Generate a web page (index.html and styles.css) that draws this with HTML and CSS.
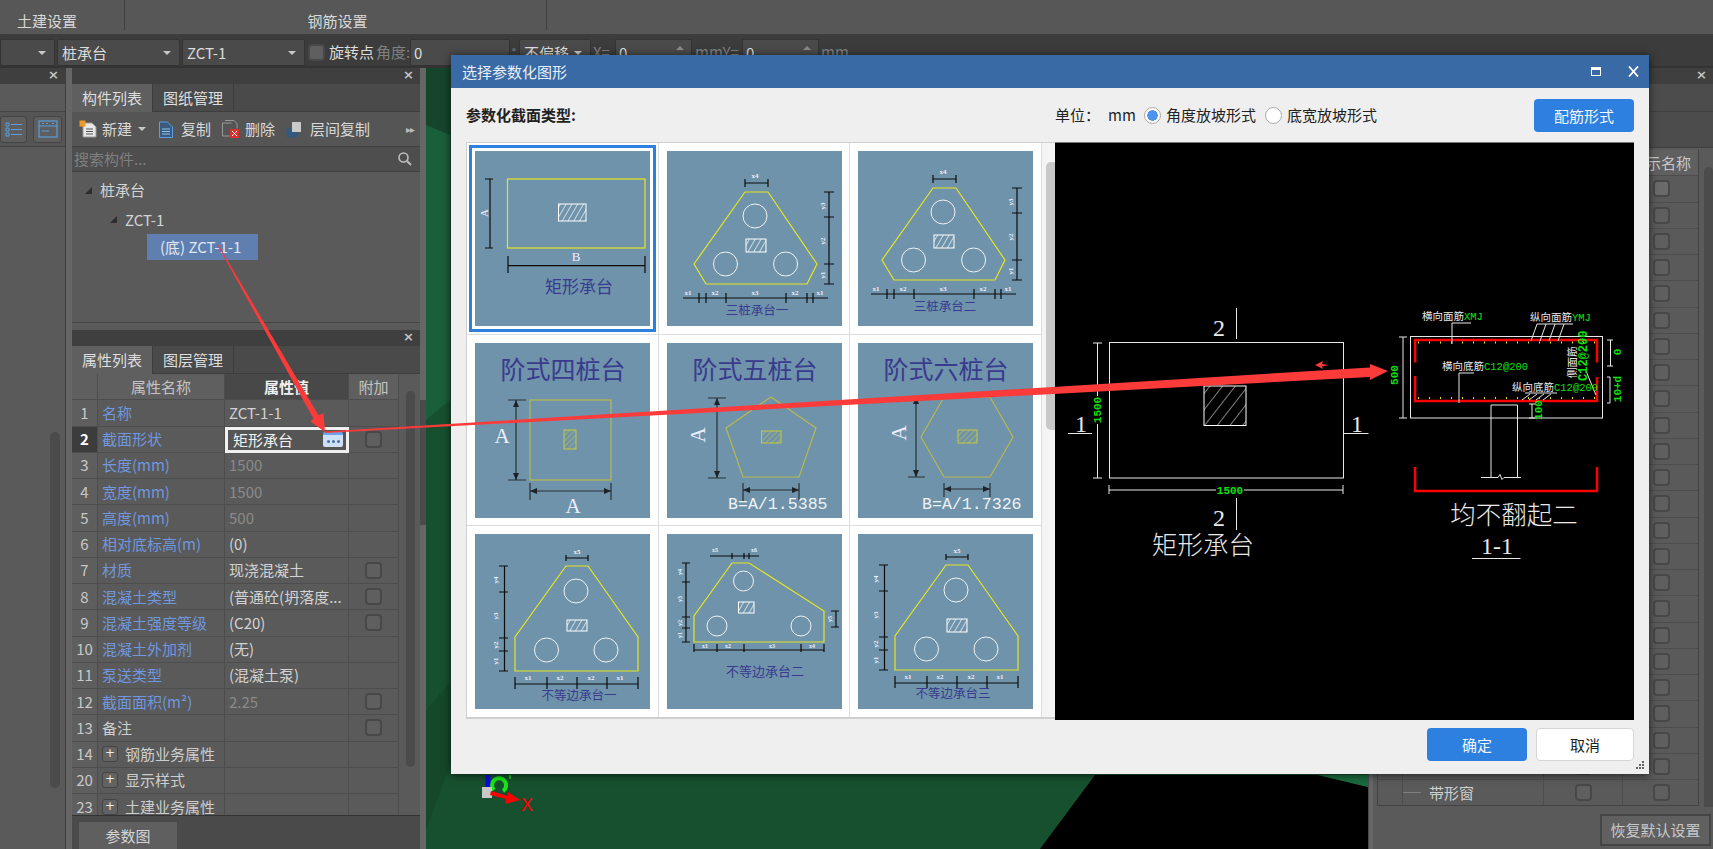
FILE: index.html
```html
<!DOCTYPE html>
<html lang="zh-CN">
<head>
<meta charset="utf-8">
<title>选择参数化图形</title>
<link rel="stylesheet" href="styles.css">
</head>
<body>
<svg class="defs" width="0" height="0" aria-hidden="true">
  <defs>
    <pattern id="hw" width="5" height="5" patternUnits="userSpaceOnUse" patternTransform="rotate(30)"><line x1="0" y1="0" x2="0" y2="5" stroke="#fff" stroke-width="1.300"/></pattern>
    <pattern id="hy" width="4" height="4" patternUnits="userSpaceOnUse" patternTransform="rotate(45)"><line x1="0" y1="0" x2="0" y2="4" stroke="#c9c93f" stroke-width="1"/></pattern>
    <pattern id="hb" width="10" height="10" patternUnits="userSpaceOnUse" patternTransform="rotate(38)"><line x1="0" y1="0" x2="0" y2="10" stroke="#fff" stroke-width="1"/></pattern>
  </defs>
</svg>
<div class="app">
  <header class="ribbon">
    <div class="rb-sec rb-first">土建设置</div>
    <div class="rb-sec rb-second">钢筋设置</div>
  </header>
  <div class="optbar">
    <div class="combo c1"><span class="caret"></span></div>
    <div class="combo c2">桩承台<span class="caret"></span></div>
    <div class="combo c2">ZCT-1<span class="caret"></span></div>
    <span class="cb cb-top"></span>
    <span class="opt-l">旋转点</span>
    <span class="opt-d o-a">角度:</span>
    <div class="field f1">0</div>
    <span class="deg">°</span>
    <div class="combo c3">不偏移<span class="caret"></span></div>
    <span class="opt-d o-x">X=</span>
    <div class="field f2">0<span class="spin"></span></div>
    <span class="opt-d o-y">mmY=</span>
    <div class="field f2">0<span class="spin"></span></div>
    <span class="opt-d">mm</span>
  </div>
  <div class="work">
    <aside class="dock-l">
      <div class="ptitle"><span class="x">×</span></div>
      <div class="dl-band"></div>
      <div class="dl-tools">
        <span class="tbtn tb-a"><svg width="18" height="16" viewBox="0 0 18 16"><path d="M1 2h3v3H1zM1 7h3v3H1zM1 12h3v3H1z" fill="none" stroke="#5b9fe0"/><path d="M6 3.500h11M6 8.500h11M6 13.500h11" stroke="#5b9fe0"/></svg></span>
        <span class="tbtn tb-b"><svg width="20" height="18" viewBox="0 0 20 18"><rect x="1" y="1" width="18" height="16" fill="none" stroke="#5b9fe0" stroke-width="1.200"/><path d="M1 6h18M4 3.500h2M8 3.500h2M14 3.500h2M4 11h7" stroke="#5b9fe0"/></svg></span>
      </div>
      <div class="dl-body"><span class="dl-thumb"></span></div>
    </aside>
    <div class="gut g7"></div>
    <div class="col-mid">
      <section class="panel p-list">
        <div class="ptitle"><span class="x">×</span></div>
        <div class="tabs"><span class="tab on">构件列表</span><span class="tab">图纸管理</span></div>
        <div class="lt-tools">
          <svg class="ic i-new" width="18" height="18" viewBox="0 0 18 18"><path d="M4 3h9l4 4v10H4z" fill="#e8e8e8" stroke="#9a9a9a"/><path d="M7 9h7M7 11.500h7M7 14h7" stroke="#555"/><rect x="0.500" y="0.500" width="6" height="6" fill="#f09a28"/></svg>
          <span class="lt">新建</span><span class="caret cr-new"></span>
          <svg class="ic i-cp" width="16" height="17" viewBox="0 0 16 17"><path d="M1.500 1h8l5 5v10.500h-13z" fill="#3a5a7e" stroke="#5b9fe0"/><path d="M4 8h8M4 10.500h8M4 13h8" stroke="#8fc3f0"/></svg>
          <span class="lt">复制</span>
          <svg class="ic i-del" width="18" height="18" viewBox="0 0 18 18"><path d="M3 .500h9l3 3v5" fill="none" stroke="#999"/><path d="M.500 3h9M.500 3v13h7" fill="none" stroke="#999"/><rect x="8" y="9" width="9" height="9" fill="#d8322f"/><path d="M10 11l5 5M15 11l-5 5" stroke="#fff"/></svg>
          <span class="lt">删除</span>
          <svg class="ic i-lay" width="16" height="17" viewBox="0 0 16 17"><path d="M1 6v10h9l3-3" fill="#33597f" stroke="#33597f"/><rect x="6" y="1" width="9" height="10" fill="#c9c9c9"/></svg>
          <span class="lt">层间复制</span>
          <span class="more">▸▸</span>
        </div>
        <div class="search"><span>搜索构件...</span><svg width="14" height="14" viewBox="0 0 14 14"><circle cx="5.500" cy="5.500" r="4.500" fill="none" stroke="#bdbdbd" stroke-width="1.600"/><path d="M9 9l4 4" stroke="#bdbdbd" stroke-width="2"/></svg></div>
        <div class="tree">
          <div class="node n0"><span class="tri"></span>桩承台</div>
          <div class="node n1"><span class="tri"></span>ZCT-1</div>
          <div class="node n2"><span class="picked">(底) ZCT-1-1</span></div>
        </div>
      </section>
      <section class="panel p-prop">
        <div class="ptitle"><span class="x">×</span></div>
        <div class="tabs"><span class="tab on">属性列表</span><span class="tab">图层管理</span></div>
        <div class="pwrap">
          <div class="ptable">
            <div class="pc hd"></div><div class="pc hd hn">属性名称</div><div class="pc hd hv">属性值</div><div class="pc hd ha">附加</div>
            <div class="pc num">1</div><div class="pc nm">名称</div><div class="pc val">ZCT-1-1</div><div class="pc add"></div>
            <div class="pc num cur">2</div><div class="pc nm">截面形状</div><div class="pc val edit">矩形承台<span class="dots"><i></i><i></i><i></i></span></div><div class="pc add"><span class="cb"></span></div>
            <div class="pc num">3</div><div class="pc nm">长度(mm)</div><div class="pc val dim">1500</div><div class="pc add"></div>
            <div class="pc num">4</div><div class="pc nm">宽度(mm)</div><div class="pc val dim">1500</div><div class="pc add"></div>
            <div class="pc num">5</div><div class="pc nm">高度(mm)</div><div class="pc val dim">500</div><div class="pc add"></div>
            <div class="pc num">6</div><div class="pc nm">相对底标高(m)</div><div class="pc val">(0)</div><div class="pc add"></div>
            <div class="pc num">7</div><div class="pc nm">材质</div><div class="pc val">现浇混凝土</div><div class="pc add"><span class="cb"></span></div>
            <div class="pc num">8</div><div class="pc nm">混凝土类型</div><div class="pc val">(普通砼(坍落度...</div><div class="pc add"><span class="cb"></span></div>
            <div class="pc num">9</div><div class="pc nm">混凝土强度等级</div><div class="pc val">(C20)</div><div class="pc add"><span class="cb"></span></div>
            <div class="pc num">10</div><div class="pc nm">混凝土外加剂</div><div class="pc val">(无)</div><div class="pc add"></div>
            <div class="pc num">11</div><div class="pc nm">泵送类型</div><div class="pc val">(混凝土泵)</div><div class="pc add"></div>
            <div class="pc num">12</div><div class="pc nm">截面面积(m²)</div><div class="pc val dim">2.25</div><div class="pc add"><span class="cb"></span></div>
            <div class="pc num">13</div><div class="pc nm grey">备注</div><div class="pc val"></div><div class="pc add"><span class="cb"></span></div>
            <div class="pc num">14</div><div class="pc nm grey grp"><span class="plus">+</span>钢筋业务属性</div><div class="pc val"></div><div class="pc add"></div>
            <div class="pc num">20</div><div class="pc nm grey grp"><span class="plus">+</span>显示样式</div><div class="pc val"></div><div class="pc add"></div>
            <div class="pc num">23</div><div class="pc nm grey grp"><span class="plus">+</span>土建业务属性</div><div class="pc val"></div><div class="pc add"></div>
          </div>
          <div class="pscroll"><span class="pthumb"></span></div>
        </div>
        <div class="btabs"><span class="btab">参数图</span></div>
      </section>
    </div>
    <div class="gut g6"><span class="handle"></span></div>
    <main class="view">
      <svg class="scene" viewBox="426 68 942 781" width="942" height="781" aria-hidden="true">
        <rect x="426" y="68" width="942" height="781" fill="#17502f"/>
        <polygon points="426,68 1368,68 1368,100 450,135 426,125" fill="#16452c"/>
        <polygon points="426,125 450,135 450,400 426,420" fill="#1a5e3a"/>
        <polygon points="426,710 452,680 452,760 426,830" fill="#154829"/>
        <polygon points="1040,849 1095,775 1318,775 1368,787 1368,849" fill="#000"/>
        <polygon points="1318,775 1368,775 1368,787" fill="#1b6a3e"/>
        <path d="M488 775v16" stroke="#0a0ae0" stroke-width="5"/>
        <path d="M494 790a7 7 0 1 1 9 1" fill="none" stroke="#19e619" stroke-width="4"/>
        <path d="M510 775v4" stroke="#19e619" stroke-width="1.500"/>
        <rect x="482" y="787" width="10" height="11" fill="#c8c8c8"/>
        <polygon points="491,791 508,796 508,792 520,800 505,804 506,799 490,795" fill="#f00"/>
        <text class="axis" x="521" y="811">X</text>
      </svg>
    </main>
    <div class="gut g5"></div>
    <aside class="dock-r">
      <div class="ptitle"><span class="x">×</span></div>
      <div class="dr-band b1"></div>
      <div class="dr-band b2"></div>
      <div class="dr-main">
        <div class="rtable">
          <div class="rrow rhead"><span></span><span>构件类型</span><span>显示图元</span><span>显示名称</span></div>
          <div class="rrow"><span></span><span></span><span><b class="cb lit"></b></span><span><b class="cb lit"></b></span></div>
          <div class="rrow"><span></span><span></span><span><b class="cb"></b></span><span><b class="cb"></b></span></div>
          <div class="rrow"><span></span><span></span><span><b class="cb"></b></span><span><b class="cb"></b></span></div>
          <div class="rrow"><span></span><span></span><span><b class="cb"></b></span><span><b class="cb"></b></span></div>
          <div class="rrow"><span></span><span></span><span><b class="cb"></b></span><span><b class="cb"></b></span></div>
          <div class="rrow"><span></span><span></span><span><b class="cb"></b></span><span><b class="cb"></b></span></div>
          <div class="rrow"><span></span><span></span><span><b class="cb"></b></span><span><b class="cb"></b></span></div>
          <div class="rrow"><span></span><span></span><span><b class="cb"></b></span><span><b class="cb"></b></span></div>
          <div class="rrow"><span></span><span></span><span><b class="cb"></b></span><span><b class="cb"></b></span></div>
          <div class="rrow"><span></span><span></span><span><b class="cb"></b></span><span><b class="cb"></b></span></div>
          <div class="rrow"><span></span><span></span><span><b class="cb"></b></span><span><b class="cb"></b></span></div>
          <div class="rrow"><span></span><span></span><span><b class="cb"></b></span><span><b class="cb"></b></span></div>
          <div class="rrow"><span></span><span></span><span><b class="cb"></b></span><span><b class="cb"></b></span></div>
          <div class="rrow"><span></span><span></span><span><b class="cb"></b></span><span><b class="cb"></b></span></div>
          <div class="rrow"><span></span><span></span><span><b class="cb"></b></span><span><b class="cb"></b></span></div>
          <div class="rrow"><span></span><span></span><span><b class="cb"></b></span><span><b class="cb"></b></span></div>
          <div class="rrow"><span></span><span></span><span><b class="cb"></b></span><span><b class="cb"></b></span></div>
          <div class="rrow"><span></span><span></span><span><b class="cb"></b></span><span><b class="cb"></b></span></div>
          <div class="rrow"><span></span><span></span><span><b class="cb"></b></span><span><b class="cb"></b></span></div>
          <div class="rrow"><span></span><span></span><span><b class="cb"></b></span><span><b class="cb"></b></span></div>
          <div class="rrow"><span></span><span></span><span><b class="cb"></b></span><span><b class="cb"></b></span></div>
          <div class="rrow"><span></span><span></span><span><b class="cb"></b></span><span><b class="cb"></b></span></div>
          <div class="rrow"><span></span><span></span><span><b class="cb"></b></span><span><b class="cb"></b></span></div>
          <div class="rrow"><span></span><span class="rname"><i class="dash"></i>带形窗</span><span><b class="cb"></b></span><span><b class="cb"></b></span></div>
        </div>
        <div class="rscroll"></div>
      </div>
      <div class="dr-foot"><span class="restore">恢复默认设置</span></div>
    </aside>
  </div>

  <div class="dialog">
    <div class="dlg-title">
      <span class="dlg-name">选择参数化图形</span>
      <span class="dlg-max"></span>
      <svg class="dlg-x" width="13" height="11" viewBox="0 0 13 11"><path d="M2 .500l9 10M11 .500l-9 10" stroke="#fff" stroke-width="1.800"/></svg>
    </div>
    <div class="dlg-top">
      <b class="dlg-label">参数化截面类型:</b>
      <span class="unit">单位：</span><span class="unit-v">mm</span>
      <span class="radio on"></span><span class="r-t">角度放坡形式</span>
      <span class="radio"></span><span class="r-t">底宽放坡形式</span>
      <span class="btn pri btn-top">配筋形式</span>
    </div>
    <div class="dlg-main">
      <div class="gallery">
        <div class="cells">
          <div class="cell sel">
            <svg class="thumb" viewBox="0 0 175 175">
              <rect class="ly" x="32.500" y="28" width="137.500" height="69"/>
              <rect x="83.500" y="53" width="27.500" height="17" fill="url(#hw)" stroke="#fff"/>
              <path class="lk" d="M15 28v69M10 28h8M10 97h8M33 114.700h137M33 105v17M170 105v17"/>
              <text class="tw s11 sf" transform="rotate(-90 9 62)" x="9" y="66">A</text>
              <text class="tw s13 sf" x="101" y="110">B</text>
              <text class="tp s17" x="104" y="142">矩形承台</text>
            </svg>
          </div>
          <div class="cell">
            <svg class="thumb" viewBox="0 0 175 175"><g>
              <polygon class="ly" points="78,41 101,41 150,113 140,133 39,133 27,113"/>
              <circle class="lw" cx="88" cy="65" r="12"/><circle class="lw" cx="58.500" cy="113" r="12"/><circle class="lw" cx="118.600" cy="113" r="12"/>
              <rect x="79" y="88" width="20" height="13" fill="url(#hw)" stroke="#fff"/>
              <path class="lk" d="M78 32h23M78 28v8M101 28v8M162 41v92M157 41h10M157 66h10M157 113h10M157 133h10M16 147h145M32 142v10M39 142v10M59 142v10M119 142v10M140 142v10M146 142v10"/>
              <text class="tw s7" x="88" y="27">x4</text>
              <text class="tw s7" transform="rotate(-90 156 55)" x="156" y="57">y3</text><text class="tw s7" transform="rotate(-90 156 90)" x="156" y="92">y2</text><text class="tw s7" transform="rotate(-90 156 124)" x="156" y="126">y1</text>
              <text class="tw s7" x="21" y="144">x1</text><text class="tw s7" x="48" y="144">x2</text><text class="tw s7" x="88" y="144">x3</text><text class="tw s7" x="128" y="144">x2</text><text class="tw s7" x="153" y="144">x1</text>
              <text class="tp s12" x="90" y="164">三桩承台一</text>
            </g></svg>
          </div>
          <div class="cell">
            <svg class="thumb" viewBox="0 0 175 175"><g transform="translate(-3 -4)">
              <polygon class="ly" points="78,41 101,41 150,113 140,133 39,133 27,113"/>
              <circle class="lw" cx="88" cy="65" r="12"/><circle class="lw" cx="58.500" cy="113" r="12"/><circle class="lw" cx="118.600" cy="113" r="12"/>
              <rect x="79" y="88" width="20" height="13" fill="url(#hw)" stroke="#fff"/>
              <path class="lk" d="M78 32h23M78 28v8M101 28v8M162 41v92M157 41h10M157 66h10M157 113h10M157 133h10M16 147h145M32 142v10M39 142v10M59 142v10M119 142v10M140 142v10M146 142v10"/>
              <text class="tw s7" x="88" y="27">x4</text>
              <text class="tw s7" transform="rotate(-90 156 55)" x="156" y="57">y3</text><text class="tw s7" transform="rotate(-90 156 90)" x="156" y="92">y2</text><text class="tw s7" transform="rotate(-90 156 124)" x="156" y="126">y1</text>
              <text class="tw s7" x="21" y="144">x1</text><text class="tw s7" x="48" y="144">x2</text><text class="tw s7" x="88" y="144">x3</text><text class="tw s7" x="128" y="144">x2</text><text class="tw s7" x="153" y="144">x1</text>
              <text class="tp s12" x="90" y="164">三桩承台二</text>
            </g></svg>
          </div>
          <div class="cell">
            <svg class="thumb" viewBox="0 0 175 175">
              <text class="tp s25" x="88" y="36">阶式四桩台</text>
              <rect class="lo" x="55" y="57" width="81" height="80"/>
              <rect x="89" y="87" width="12" height="19" fill="url(#hy)" stroke="#c9c93f"/>
              <path class="ld" d="M41 57v80M33 57h18M33 137h18M55 148h81M55 140v17M136 140v17"/>
              <path class="af" d="M41 57l-3 7h6zM41 137l-3-7h6zM55 148l7-3v6zM136 148l-7-3v6z"/>
              <text class="tw s20 sf" x="27" y="100">A</text>
              <text class="tw s20 sf" x="98" y="170">A</text>
            </svg>
          </div>
          <div class="cell">
            <svg class="thumb" viewBox="0 0 175 175">
              <text class="tp s25" x="88" y="36">阶式五桩台</text>
              <polygon class="lo" points="104,54 149,85 132,134 76,134 59,85"/>
              <rect x="94.500" y="88" width="19.500" height="12" fill="url(#hy)" stroke="#c9c93f"/>
              <path class="ld" d="M50 55v80M41 55h18M41 135h18M76 147h56M76 140v18M132 140v18"/>
              <path class="af" d="M50 55l-3 7h6zM50 135l-3-7h6zM76 147l7-3v6zM132 147l-7-3v6z"/>
              <text class="tw s20 sf" transform="rotate(-90 31 92)" x="31" y="99">A</text>
              <text class="tm" x="61" y="166">B=A/1.5385</text>
            </svg>
          </div>
          <div class="cell">
            <svg class="thumb" viewBox="0 0 175 175">
              <text class="tp s25" x="88" y="36">阶式六桩台</text>
              <polygon class="lo" points="63,94 86,54 132,54 155,94 132,134 86,134"/>
              <rect x="100" y="87" width="19" height="13" fill="url(#hy)" stroke="#c9c93f"/>
              <path class="ld" d="M58 54v80M50 54h17M50 134h17M86 146h46M86 140v14M132 140v14"/>
              <path class="af" d="M58 54l-3 7h6zM58 134l-3-7h6zM86 146l7-3v6zM132 146l-7-3v6z"/>
              <text class="tw s20 sf" transform="rotate(-90 41 90)" x="41" y="97">A</text>
              <text class="tm" x="64" y="166">B=A/1.7326</text>
            </svg>
          </div>
          <div class="cell">
            <svg class="thumb" viewBox="0 0 175 175"><g>
              <polygon class="ly" points="91,32 113,32 163,103 163,137 40,137 40,103"/>
              <circle class="lw" cx="101" cy="57" r="12"/><circle class="lw" cx="71.500" cy="116" r="12"/><circle class="lw" cx="131" cy="116" r="12"/>
              <rect x="92" y="86" width="20" height="11" fill="url(#hw)" stroke="#fff"/>
              <path class="lk" d="M91 24h22M91 21v6M113 21v6M29.500 32v105M24 32h9M24 58h9M24 104h9M24 117h9M24 137h9M40 150h123M40 143v12M72 143v12M102 143v12M132 143v12M163 143v12"/>
              <text class="tw s7" x="102" y="20">x5</text>
              <text class="tw s7" transform="rotate(-90 21 46)" x="21" y="48">y4</text><text class="tw s7" transform="rotate(-90 21 82)" x="21" y="84">y3</text><text class="tw s7" transform="rotate(-90 21 111)" x="21" y="113">y2</text><text class="tw s7" transform="rotate(-90 21 127)" x="21" y="129">y1</text>
              <text class="tw s7" x="53" y="146">x1</text><text class="tw s7" x="85" y="146">x2</text><text class="tw s7" x="116" y="146">x2</text><text class="tw s7" x="145" y="146">x1</text>
              <text class="tp s12" x="104" y="166">不等边承台一</text>
            </g></svg>
          </div>
          <div class="cell">
            <svg class="thumb" viewBox="0 0 175 175">
              <polygon class="ly" points="65,29 82,29 157,77 157,108 27,108 27,82"/>
              <circle class="lw" cx="76.500" cy="47" r="10"/><circle class="lw" cx="50" cy="92" r="10"/><circle class="lw" cx="134" cy="92" r="10"/>
              <rect x="71.500" y="68" width="15.500" height="11" fill="url(#hw)" stroke="#fff"/>
              <path class="lk" d="M43 22h49M65 19v6M77 19v6M82 19v6M19 29v79M15 29h8M15 48h8M15 83h8M15 94h8M15 108h8M169 77v16M164 77h8M164 93h8M27 116h130M27 110v8M50 110v8M77 110v8M134 110v8M157 110v8"/>
              <text class="tw s6" x="48" y="18">x5</text><text class="tw s6" x="87" y="18">x6</text>
              <text class="tw s6" transform="rotate(-90 13 38)" x="13" y="40">y4</text><text class="tw s6" transform="rotate(-90 13 65)" x="13" y="67">y3</text><text class="tw s6" transform="rotate(-90 13 89)" x="13" y="91">y2</text><text class="tw s6" transform="rotate(-90 13 101)" x="13" y="103">y1</text><text class="tw s6" transform="rotate(-90 163 85)" x="163" y="87">y5</text>
              <text class="tw s6" x="38" y="114">x1</text><text class="tw s6" x="61" y="114">x2</text><text class="tw s6" x="105" y="114">x3</text><text class="tw s6" x="145" y="114">x4</text>
              <text class="tp s13a" x="98" y="142">不等边承台二</text>
            </svg>
          </div>
          <div class="cell">
            <svg class="thumb" viewBox="0 0 175 175"><g transform="translate(-3 -1)">
              <polygon class="ly" points="91,32 113,32 163,103 163,137 40,137 40,103"/>
              <circle class="lw" cx="101" cy="57" r="12"/><circle class="lw" cx="71.500" cy="116" r="12"/><circle class="lw" cx="131" cy="116" r="12"/>
              <rect x="92" y="86" width="20" height="13" fill="url(#hw)" stroke="#fff"/>
              <path class="lk" d="M91 24h22M91 21v6M113 21v6M29.500 32v105M24 32h9M24 58h9M24 104h9M24 117h9M24 137h9M40 150h123M40 143v12M72 143v12M102 143v12M132 143v12M163 143v12"/>
              <text class="tw s7" x="102" y="20">x5</text>
              <text class="tw s7" transform="rotate(-90 21 46)" x="21" y="48">y4</text><text class="tw s7" transform="rotate(-90 21 82)" x="21" y="84">y3</text><text class="tw s7" transform="rotate(-90 21 111)" x="21" y="113">y2</text><text class="tw s7" transform="rotate(-90 21 127)" x="21" y="129">y1</text>
              <text class="tw s7" x="53" y="146">x1</text><text class="tw s7" x="85" y="146">x2</text><text class="tw s7" x="116" y="146">x2</text><text class="tw s7" x="145" y="146">x1</text>
              <text class="tp s12" x="98" y="165">不等边承台三</text>
            </g></svg>
          </div>
          <div class="cell"></div><div class="cell"></div><div class="cell"></div>
        </div>
        <div class="gscroll"><span class="gthumb"></span></div>
      </div>
      <div class="preview">
        <svg class="cad" viewBox="1055 142 579 578" width="579" height="578">
          <rect class="cw" x="1109.500" y="341.500" width="234" height="135.500"/>
          <rect x="1204" y="385" width="42" height="39.500" fill="url(#hb)" stroke="#fff"/>
          <path class="cw" d="M1236.500 307v31M1236.500 497v32M1068 432.500h24M1343.500 432.500h25M1097.500 342v135M1093 342h9M1093 477h9M1109 489h234M1109 484v9M1343 484v9"/>
          <text class="cn s21" x="1219" y="335">2</text><text class="cn s21" x="1219" y="525">2</text>
          <text class="cn s21" x="1081" y="431">1</text><text class="cn s21" x="1357" y="431">1</text>
          <rect x="1091" y="395" width="13" height="28" fill="#000"/>
          <text class="cg s10" transform="rotate(-90 1097 409)" x="1097" y="412.500">1500</text>
          <rect x="1216" y="484" width="28" height="10" fill="#000"/>
          <text class="cg s10" x="1230" y="493">1500</text>
          <text class="cn s25n" x="1203" y="553">矩形承台</text>

          <rect class="cw" x="1410.500" y="335.500" width="192" height="81.500"/>
          <path class="cr" d="M1415 361.500V339h182v22.500M1415 375v25h182v-24"/>
          <path class="cr" d="M1415 466v24h182v-24"/>
          <path class="dotted" d="M1418 341.500h178M1418 397h178"/>
          <path class="cw" d="M1491 476.500V404h26.500v72.500M1481 476.500h17l2-3 2 5 2-2h17"/>
          <path class="cw" d="M1403 336v81M1399 336h8M1399 417h8M1452 343v-21h19M1459 402v-30h15M1537 323h36M1531 340l6-17M1540 340l6-17M1549 340l6-17M1558 340l6-17M1522 399l8-6M1529 399l8-6M1536 399l8-6M1543 399l8-6M1525 392h32"/>
          <path class="cw" d="M1610.500 339v26M1607 339h6M1607 365h6M1610 376v26M1607 376h3M1607 402h3M1532 403v14M1529 403h6M1529 417h6M1586 370l10 24"/>
          <text class="cn s10a st" x="1422" y="319">横向面筋<tspan class="g">XMJ</tspan></text>
          <text class="cn s10a st" x="1530" y="320">纵向面筋<tspan class="g">YMJ</tspan></text>
          <text class="cn s10a st" x="1442" y="369">横向底筋<tspan class="g">C12@200</tspan></text>
          <text class="cn s10a st" x="1512" y="390">纵向底筋<tspan class="g">C12@200</tspan></text>
          <text class="cn s10a st" transform="rotate(-90 1576 377)" x="1576" y="377">侧面筋</text>
          <text class="cg s11a st" transform="rotate(-90 1587 380)" x="1587" y="380">C12@200</text>
          <text class="cg s10" transform="rotate(-90 1394 374)" x="1394" y="378">500</text>
          <text class="cg s10" transform="rotate(-90 1617 351)" x="1617" y="355">0</text>
          <text class="cg s10" transform="rotate(-90 1617 388)" x="1617" y="392">10+d</text>
          <text class="cg s10" transform="rotate(-90 1538 409)" x="1538" y="413">100</text>
          <text class="cn s25n" x="1514" y="523">均不翻起二</text>
          <text class="cn s21" x="1497" y="553">1-1</text>
          <path class="cw" d="M1472 557.500h48.500"/>
        </svg>
      </div>
    </div>
    <div class="dlg-foot">
      <span class="btn pri">确定</span><span class="btn sec">取消</span>
      <svg class="grip" width="10" height="10" viewBox="0 0 10 10"><path d="M7 1h2v2H7zM4 4h2v2H4zM7 4h2v2H7zM1 7h2v2H1zM4 7h2v2H4zM7 7h2v2H7z" fill="#666"/></svg>
    </div>
  </div>

  <svg class="arrows" viewBox="0 0 1713 849" width="1713" height="849" aria-hidden="true">
    <polygon points="217.500,245 218.500,245 318.600,415.500 323.500,413 325,432 310.500,421.500 313.400,418.500"/>
    <polygon points="325,431.500 1370,367.500 1370,364 1388,371 1370,380 1370,377 325,433"/>
    <polygon points="1315,365 1323,361 1322,364 1329,365 1322,366.500 1323,369"/>
  </svg>
</div>
</body>
</html>
```

FILE: styles.css
```css
* { box-sizing: border-box; }
html, body { margin: 0; height: 100%; overflow: hidden; background: #5a5a5a; }
body { font: 15px/1.2 "Noto Sans CJK SC", "Noto Sans", sans-serif; color: #d4d4d4; }
.defs { position: absolute; }
.app { position: relative; width: 1713px; height: 849px; display: flex; flex-direction: column; overflow: hidden; }

/* ribbon */
.ribbon { height: 36px; display: flex; background: #575757; border-bottom: 2px solid #3d3d3d; flex: none; }
.rb-sec { height: 30px; padding-top: 11px; line-height: 20px; border-right: 1px solid #3f3f3f; color: #d8d8d8; }
.rb-first { width: 125px; padding-left: 17px; }
.rb-second { width: 422px; text-align: center; padding-left: 4px; }

/* options bar */
.optbar { height: 32px; flex: none; display: flex; align-items: center; gap: 2px; background: #3c3c3c; border-bottom: 2px solid #333; padding-top: 2px; }
.combo { height: 27px; line-height: 25px; background: #4a4a4a; border: 1px solid #343434; border-radius: 2px; padding-left: 4px; position: relative; color: #dcdcdc; }
.c1 { width: 55px; } .c2 { width: 123px; } .c3 { width: 72px; margin-left: 1px; padding-left: 4px; }
.caret { position: absolute; right: 8px; top: 11px; width: 0; height: 0; border: 4px solid transparent; border-top: 4px solid #c8c8c8; border-bottom: 0; }
.cb-top { margin-left: 1px; margin-right: 2px; }
.opt-l { color: #dcdcdc; width: 45px; white-space: nowrap; }
.opt-d { color: #808080; white-space: nowrap; }
.o-a { width: 32px; }
.field { height: 27px; line-height: 25px; background: #4a4a4a; border: 1px solid #343434; padding-left: 3px; color: #dcdcdc; position: relative; }
.f1 { width: 100px; } .f2 { width: 77px; }
.deg { color: #9a9a9a; font-size: 10px; width: 4px; }
.o-x { width: 20px; } .o-y { width: 45px; margin-left: 1px; }
.spin { position: absolute; right: 7px; top: 6px; border: 4px solid transparent; border-bottom: 4px solid #888; border-top: 0; }

/* working area */
.work { flex: 1; display: flex; min-height: 0; }
.gut { flex: none; background: #666; }
.g7 { width: 7px; border-left: 1px solid #3e3e3e; }
.g6 { width: 6px; padding-top: 332px; }
.g5 { width: 5px; border-left: 1px solid #4a4a4a; }
.handle { display: block; height: 125px; background: #4b4b4b; }

.ptitle { height: 16px; flex: none; background: #3f3f3f; position: relative; }
.x { position: absolute; right: 6px; top: -2px; font: 700 13px/18px "DejaVu Sans", sans-serif; color: #c4c4c4; }

.dock-l { width: 65px; flex: none; display: flex; flex-direction: column; background: #5a5a5a; }
.dl-band { height: 28px; border-bottom: 1px solid #434343; flex: none; }
.dl-tools { height: 35px; display: flex; align-items: center; gap: 6px; flex: none; border-bottom: 1px solid #434343; background: #555; }
.tbtn { height: 27px; border: 1px solid #444; border-radius: 3px; display: flex; align-items: center; justify-content: center; background: #5e5e5e; }
.tb-a { width: 27px; } .tb-b { width: 29px; }
.dl-body { flex: 1; padding: 285px 0 0 50px; }
.dl-thumb { display: block; width: 10px; height: 356px; border-radius: 5px; background: #4b4b4b; }

.col-mid { width: 348px; flex: none; display: flex; flex-direction: column; gap: 7px; }
.panel { display: flex; flex-direction: column; background: #5a5a5a; border: 0; }
.p-list { height: 255px; border-bottom: 1px solid #444; }
.p-prop { flex: 1; min-height: 0; }
.tabs { height: 28px; flex: none; display: flex; background: #4a4a4a; border-bottom: 1px solid #3d3d3d; }
.tab { width: 81px; text-align: center; line-height: 28px; background: #4a4a4a; border-right: 1px solid #3d3d3d; color: #dedede; }
.tab.on { background: #5f5f5f; height: 28px; }
.p-prop .tab { line-height: 27px; }

.lt-tools { height: 35px; flex: none; display: flex; align-items: center; padding-left: 7px; border-bottom: 1px solid #404040; background: #555; position: relative; }
.lt { color: #d8d8d8; }
.ic { flex: none; }
.i-new { margin-right: 5px; }
.cr-new { position: relative; right: auto; top: 0; margin: 0 12px 0 6px; }
.i-cp { margin-right: 7px; }
.i-del { margin: 0 5px 0 11px; }
.i-lay { margin: 0 8px 0 11px; }
.more { margin-left: auto; margin-right: 6px; font-size: 10px; color: #bbb; letter-spacing: -1px; }
.search { height: 25px; flex: none; display: flex; align-items: center; justify-content: space-between; padding: 0 8px 0 2px; background: #4e4e4e; border-bottom: 1px solid #404040; color: #7f7f7f; }
.tree { flex: 1; }
.node { height: 30px; display: flex; align-items: center; }
.n0 { margin-top: 3px; padding-left: 13px; height: 30px; }
.n1 { padding-left: 38px; height: 29px; }
.n2 { padding-left: 75px; height: 26px; }
.tri { width: 0; height: 0; border-style: solid; border-width: 0 0 7px 7px; border-color: transparent transparent #2d2d2d; margin-right: 8px; }
.picked { width: 111px; height: 26px; line-height: 26px; background: #5f7fb0; white-space: nowrap; color: #e2e8f0; padding-left: 13px; }

.pwrap { flex: 1; min-height: 0; display: flex; overflow: hidden; border-bottom: 1px solid #333; height: 443px; }
.ptable { width: 327px; flex: none; display: grid; grid-template-columns: 26px 127px 124px 50px; grid-auto-rows: 26.25px; align-content: start; }
.pc { display: flex; align-items: center; border-bottom: 1px solid #4d4d4d; border-right: 1px solid #4d4d4d; white-space: nowrap; overflow: hidden; background: #5a5a5a; }
.hd { justify-content: center; background: #5f5f5f; color: #c4c4c4; }
.hv { background: #484848; color: #f0f0f0; font-weight: 700; }
.num { justify-content: center; background: #5e5e5e; color: #c8c8c8; }
.num.cur { background: #3c3c3c; color: #fff; font-weight: 700; }
.nm { padding-left: 4px; color: #7097df; }
.nm.grey { color: #cdcdcd; }
.grp { padding-left: 4px; }
.plus { width: 16px; height: 16px; margin-right: 7px; border: 1px solid #444; border-radius: 3px; background: #626262; font: 12px/13px "DejaVu Sans", sans-serif; text-align: center; color: #eee; }
.val { padding-left: 4px; color: #d2d2d2; }
.val.dim { color: #8a8a8a; }
.edit { border: 3px solid #f0f0f0; padding-left: 5px; color: #f2f2f2; background: #555; justify-content: space-between; padding-right: 3px; }
.dots { width: 20px; height: 15px; background: #cfe0f6; border-top: 3px solid #6da3e8; border-radius: 2px; display: flex; gap: 2px; align-items: center; justify-content: center; }
.dots i { width: 3px; height: 3px; background: #4a6fa5; border-radius: 50%; }
.add { justify-content: center; }
.cb { display: inline-block; width: 17px; height: 17px; border: 2px solid #484848; border-radius: 4px; background: #5f5f5f; flex: none; }
.pscroll { width: 21px; padding: 17px 0 0 7px; background: #5a5a5a; }
.pthumb { display: block; width: 9px; height: 376px; background: #4b4b4b; border-radius: 5px; }
.btabs { height: 33px; flex: none; padding: 6px 0 0 7px; background: #4a4a4a; }
.btab { display: block; width: 98px; height: 27px; line-height: 27px; text-align: center; background: #5f5f5f; color: #d4d4d4; }

.view { width: 942px; flex: none; overflow: hidden; }
.scene { display: block; }
.axis { fill: #f00; font: 18px "Liberation Sans", sans-serif; }

.dock-r { width: 340px; flex: none; display: flex; flex-direction: column; background: #5a5a5a; }
.dr-band { flex: none; border-bottom: 1px solid #3f3f3f; background: #4c4c4c; }
.b1 { height: 28px; } .b2 { height: 36px; background: #4c4c4c; }
.dr-main { display: flex; flex: none; padding: 2px 0 0 4px; }
.rtable { width: 323px; border: 1px solid #434343; border-top: 0; height: 656px; overflow: hidden; }
.rrow { display: grid; grid-template-columns: 25px 141px 79px 77px; height: 26.25px; }
.rrow > span { display: flex; align-items: center; justify-content: center; border-right: 1px solid #4d4d4d; border-bottom: 1px solid #4d4d4d; white-space: nowrap; }
.rrow > span .cb { background: #5f5f5f; }
.rrow > span .lit { background: #6a6a6a; }
.rhead > span { background: #606060; color: #c8c8c8; }
.rname.rname { justify-content: flex-start; color: #cfcfcf; }
.dash { width: 18px; height: 1px; background: #808080; margin: 0 8px 0 0; }
.rscroll { width: 9px; height: 640px; margin: 17px 0 0 5px; background: #4b4b4b; border-radius: 5px 5px 0 0; }
.dr-foot { flex: 1; display: flex; justify-content: flex-end; padding: 7px 2px 0 0; }
.restore { width: 111px; height: 32px; line-height: 28px; text-align: center; border: 2px solid #454545; background: #606060; color: #c8c8c8; }

/* dialog */
.dialog { position: absolute; left: 451px; top: 55px; width: 1198px; height: 719px; display: flex; flex-direction: column; background: #efefef; box-shadow: 0 1px 8px rgba(0,0,0,.65); color: #222; }
.dlg-title { height: 33px; flex: none; display: flex; align-items: center; padding: 0 9px 0 11px; background: #3a6aa5; color: #e8eef6; }
.dlg-name { flex: 1; font-size: 15px; }
.dlg-max { width: 10px; height: 9px; border: 1px solid #fff; border-top-width: 3px; margin-right: 26px; }
.dlg-top { height: 54px; flex: none; display: flex; align-items: center; padding: 0 15px 0 15px; }
.dlg-label { width: 589px; font-weight: 700; font-size: 15px; }
.unit { width: 53px; } .unit-v { width: 36px; }
.radio { width: 17px; height: 17px; border-radius: 50%; background: #fff; border: 1.500px solid #a8a8a8; margin-right: 5px; flex: none; }
.radio.on { background: radial-gradient(circle, #4d94ef 0 5px, #fff 5.500px); }
.r-t { width: 99px; white-space: nowrap; }
.btn { display: block; text-align: center; border-radius: 4px; height: 33px; line-height: 33px; width: 100px; }
.pri { background: #2e80e0; color: #f2f6fc; }
.sec { background: #fff; border: 1px solid #d6d6d6; line-height: 31px; color: #222; width: 98px; }
.btn-top { margin-left: auto; margin-top: 0; }
.dlg-main { flex: none; height: 578px; display: flex; padding-left: 15px; }
.gallery { width: 589px; height: 577px; flex: none; display: flex; border: 1px solid #cfcfcf; border-width: 1px 0 2px 1px; overflow: hidden; background: #f4f4f4; }
.cells { width: 574px; flex: none; display: grid; grid-template-columns: repeat(3, 191.500px); grid-auto-rows: 191.500px; background: #fff; }
.cell { position: relative; padding: 8.250px; background: #fff; border-right: 1px solid #ddd; border-bottom: 1px solid #ddd; }
.cell.sel::after { content: ""; position: absolute; inset: 2px; border: 3px solid #2e80e0; }
.thumb { display: block; width: 175px; height: 175px; background: #6e93aa; }
.gscroll { flex: 1; padding: 19px 0 0 5px; }
.gthumb { display: block; width: 10px; height: 268px; background: #c8c8c8; border-radius: 5px 0 0 5px; }
.preview { width: 579px; height: 578px; flex: none; background: #000; border-top: 1px solid #777; }
.cad { display: block; }
.dlg-foot { flex: 1; display: flex; justify-content: flex-end; align-items: flex-start; gap: 9px; padding: 8px 15px 0 0; position: relative; }
.grip { position: absolute; right: 4px; bottom: 4px; }

/* svg drawing classes */
.ly, .lw, .lo, .cw, .cr, .lk, .ld, .dotted { fill: none; }
.ly { stroke: #e6e620; stroke-width: 1.200; }
.lw { stroke: #f2f2f2; stroke-width: 1; }
.lo { stroke: #b9b94e; stroke-width: 1.200; }
.lk { stroke: #0c0c0c; stroke-width: 1.200; }
.ld { stroke: #2a2f33; stroke-width: 1.200; }
.af { fill: #1d2226; }
.tw { fill: #eef; text-anchor: middle; font-family: "Liberation Serif", serif; font-weight: 700; }
.tm { fill: #eef2f5; font: 16.600px "Liberation Mono", monospace; }
.tp { fill: #3a3a8e; text-anchor: middle; font-family: "Noto Sans CJK SC", sans-serif; }
.sf { font-weight: 400; }
.s6 { font-size: 6px; } .s7 { font-size: 7px; } .s11 { font-size: 11px; } .s13 { font-size: 13px; }
.s12 { font-size: 12.500px; } .s13a { font-size: 13px; } .s17 { font-size: 17px; } .s20 { font-size: 21px; } .s25 { font-size: 25px; }
.cw { stroke: #e8e8e8; stroke-width: 1; }
.cr { stroke: #f00; stroke-width: 2.500; }
.dotted { stroke: #e8e020; stroke-width: 2; stroke-dasharray: 1 10; }
.cn { fill: #e8e8e8; text-anchor: middle; font-family: "Liberation Serif", "Noto Sans CJK SC", serif; }
.cg, .g { fill: #0fe00f; font-family: "Liberation Mono", monospace; }
.cg { text-anchor: middle; font-weight: 700; }
.cn.st, .cg.st { text-anchor: start; }
.s21 { font-size: 24px; }
.s25n { font-size: 25.500px; font-family: "Noto Sans CJK SC", sans-serif; font-weight: 300; }
.s10 { font-size: 11px; }
.s10a { font-size: 10.500px; font-family: "Noto Sans CJK SC", sans-serif; }
.s11a { font-size: 12px; }

.arrows { position: absolute; left: 0; top: 0; pointer-events: none; }
.arrows polygon { fill: #fb3a3a; }
```
